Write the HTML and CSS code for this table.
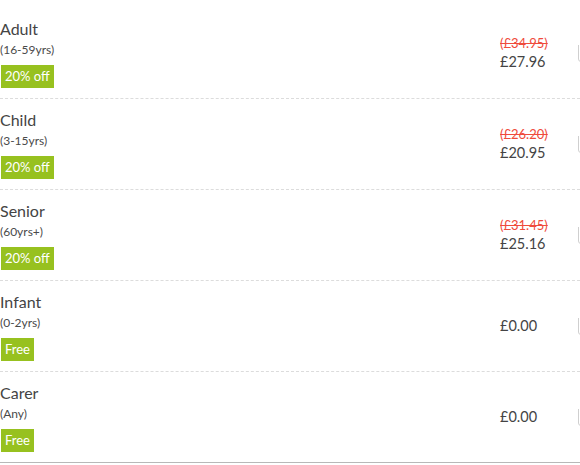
FILE: index.html
```html
<!DOCTYPE html>
<html>
<head>
<meta charset="utf-8">
<link rel="stylesheet" href="styles.css">
</head>
<body>
<div class="tickets">
  <div class="row">
    <div class="info">
      <div class="name">Adult</div>
      <div class="age">(16-59yrs)</div>
      <span class="badge">20% off</span>
    </div>
    <div class="price">
      <div class="was">(£34.95)</div>
      <div class="now">£27.96</div>
    </div>
    <div class="qty"><span class="box"></span></div>
  </div>
  <div class="row">
    <div class="info">
      <div class="name">Child</div>
      <div class="age">(3-15yrs)</div>
      <span class="badge">20% off</span>
    </div>
    <div class="price">
      <div class="was">(£26.20)</div>
      <div class="now">£20.95</div>
    </div>
    <div class="qty"><span class="box"></span></div>
  </div>
  <div class="row">
    <div class="info">
      <div class="name">Senior</div>
      <div class="age">(60yrs+)</div>
      <span class="badge">20% off</span>
    </div>
    <div class="price">
      <div class="was">(£31.45)</div>
      <div class="now">£25.16</div>
    </div>
    <div class="qty"><span class="box"></span></div>
  </div>
  <div class="row">
    <div class="info">
      <div class="name">Infant</div>
      <div class="age">(0-2yrs)</div>
      <span class="badge">Free</span>
    </div>
    <div class="price">
      <div class="now">£0.00</div>
    </div>
    <div class="qty"><span class="box"></span></div>
  </div>
  <div class="row last">
    <div class="info">
      <div class="name">Carer</div>
      <div class="age">(Any)</div>
      <span class="badge">Free</span>
    </div>
    <div class="price">
      <div class="now">£0.00</div>
    </div>
    <div class="qty"><span class="box"></span></div>
  </div>
</div>
</body>
</html>
```
FILE: styles.css
```css
html, body {
  margin: 0;
  padding: 0;
  overflow: hidden;
  background: #fff;
}
body {
  font-family: "Source Sans Pro", Lato, "Noto Sans", sans-serif;
  color: #3a3a3a;
}
.tickets {
  padding-top: 8px;
  width: 580px;
  overflow: hidden;
}
.row {
  display: grid;
  grid-template-columns: 500px 78px 2px;
  align-items: center;
  padding: 10px 0;
  border-bottom: 1px dashed #dcdcdc;
}
.row.last {
  border-bottom: 1px solid #b8b8b8;
}
.info {
  display: flex;
  flex-direction: column;
  align-items: flex-start;
}
.name {
  font-size: 16px;
  line-height: 22px;
  color: #444;
}
.age {
  font-size: 12px;
  line-height: 20px;
  color: #4a4a4a;
}
.badge {
  margin-top: 5px;
  margin-left: 1px;
  background: #97c11f;
  color: #fff;
  font-size: 13px;
  line-height: 23px;
  height: 23px;
  padding: 0 4px;
}
.price {
  display: flex;
  flex-direction: column;
}
.was {
  font-size: 13px;
  line-height: 17px;
  color: #ef4b3c;
  text-decoration: line-through;
}
.now {
  font-size: 14.5px;
  line-height: 20px;
  color: #444;
}
.qty {
  display: flex;
  align-items: center;
  overflow: hidden;
}
.box {
  display: block;
  flex: none;
  width: 40px;
  height: 27px;
  border: 1px solid #cfcfcf;
  border-radius: 3px;
  box-sizing: border-box;
  margin-top: -10px;
}
```
